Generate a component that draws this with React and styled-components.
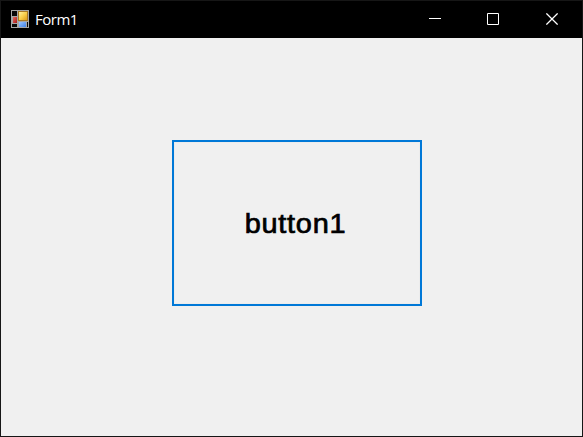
import React from 'react';
import styled, { createGlobalStyle } from 'styled-components';

const Global = createGlobalStyle`
  * { box-sizing: border-box; }
  body { margin: 0; overflow: hidden; }
`;
const Window = styled.main`
  width: 583px; height: 437px;
  display: flex; flex-direction: column;
  background: #f0f0f0; border: 1px solid #161616;
`;
const TitleBar = styled.header`
  height: 37px; flex: none; display: flex; align-items: center;
  background: #000; color: #fff; padding-left: 10px;
`;
const AppIcon = styled.svg`
  width: 18px; height: 18px; margin-bottom: 1px;
`;
const Title = styled.span`
  margin: 0 0 1px 6px; flex: 1;
  font: 15px "Open Sans", "Noto Sans", sans-serif; letter-spacing: -0.5px;
`;
const Caption = styled.button`
  width: ${p => p.$width || 58}px; height: 37px; padding: 0 2px 2px 0;
  border: 0; background: none; color: #fff;
  display: flex; align-items: center; justify-content: center;
`;
const Client = styled.section`
  flex: 1; display: flex; align-items: flex-start; padding: 102px 0 0 171px;
`;
const FormButton = styled.button`
  width: 250px; height: 166px; padding: 3px 3px 0 0;
  border: 2px solid #0078d7; background: #f0f0f0; color: #000;
  box-shadow: inset 0 0 0 1px #ececec;
  font: 27px "Liberation Sans", sans-serif;
  -webkit-text-stroke: 0.7px #000;
`;
const ButtonLabel = styled.span`
  display: inline-block; transform: scaleX(1.07); letter-spacing: 0.7px;
`;

const FormIcon = () => (
  <AppIcon viewBox="0 0 18 18" shapeRendering="crispEdges">
    <defs>
      <linearGradient id="gold" x2="1" y2="1"><stop stopColor="#fff0a0" /><stop offset=".5" stopColor="#f8cf4c" /><stop offset="1" stopColor="#dc9c18" /></linearGradient>
      <linearGradient id="blue" x2="1" y2="1"><stop stopColor="#9cc6ff" /><stop offset="1" stopColor="#3f80e6" /></linearGradient>
      <linearGradient id="red" x2="1" y2="1"><stop stopColor="#e56a60" /><stop offset="1" stopColor="#a81818" /></linearGradient>
    </defs>
    <path d="M0 0H18V18H0Z" fill="#a6a6a6" />
    <path d="M1 1H6V6H1ZM1 14H6V17H1ZM16 12H17V17H16Z" fill="#080808" />
    <path d="M7 1H17V11H7Z" fill="#a87822" /><path d="M8 2H16V10H8Z" fill="url(#gold)" />
    <path d="M2 7H6V13H2Z" fill="url(#red)" />
    <path d="M8 12H15V17H8Z" fill="url(#blue)" />
  </AppIcon>
);

export default function App() {
  return (
    <Window>
      <Global />
      <TitleBar>
        <FormIcon />
        <Title>Form1</Title>
        <Caption aria-label="Minimize"><svg width="12" height="12"><path d="M0 5.5H12" stroke="#fff" /></svg></Caption>
        <Caption aria-label="Maximize"><svg width="12" height="12"><path d="M.5 .5H11.5V11.5H.5Z" fill="none" stroke="#fff" /></svg></Caption>
        <Caption aria-label="Close" $width={59}><svg width="12" height="12"><path d="M.4 .4L11.6 11.6M11.6 .4L.4 11.6" stroke="#fff" strokeWidth="1.25" /></svg></Caption>
      </TitleBar>
      <Client><FormButton><ButtonLabel>button1</ButtonLabel></FormButton></Client>
    </Window>
  );
}
